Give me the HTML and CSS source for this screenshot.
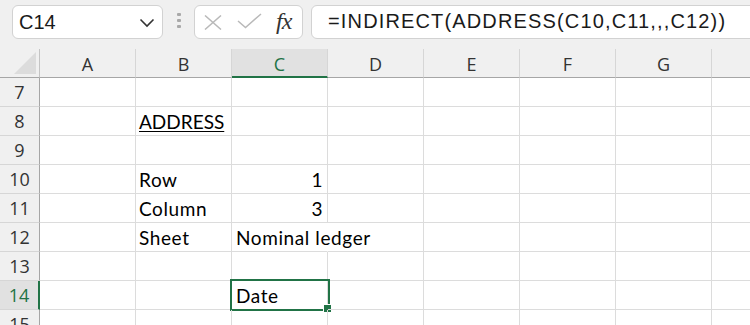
FILE: index.html
```
<!DOCTYPE html>
<html>
<head>
<meta charset="utf-8">
<link rel="stylesheet" href="styles.css">
</head>
<body>
<div class="toolbar">
  <div class="namebox">
    <span class="nb-text">C14</span>
    <svg class="chev" width="16" height="10" viewBox="0 0 16 10"><path d="M1.5 1.5 L8 8 L14.5 1.5" fill="none" stroke="#333" stroke-width="1.6"/></svg>
  </div>
  <div class="grip"><i></i><i></i><i></i></div>
  <div class="fxbox">
    <svg class="ico-x" width="18" height="15" viewBox="0 0 18 15"><path d="M1 0.5 L17 14.5 M17 0.5 L1 14.5" fill="none" stroke="#b9b9b9" stroke-width="1.5"/></svg>
    <svg class="ico-ok" width="25" height="16" viewBox="0 0 25 16"><path d="M1 8 L8.5 14.5 L24 1" fill="none" stroke="#b9b9b9" stroke-width="1.5"/></svg>
    <span class="fx">fx</span>
  </div>
  <div class="formula">=INDIRECT(ADDRESS(C10,C11,,,C12))</div>
</div>
<div class="sheet">
  <div class="hdr corner"><svg width="22" height="22" viewBox="0 0 22 22"><path d="M22 0 L22 22 L0 22 Z" fill="#dcdcdc"/></svg></div>
  <div class="hdr col">A</div>
  <div class="hdr col">B</div>
  <div class="hdr col active">C</div>
  <div class="hdr col">D</div>
  <div class="hdr col">E</div>
  <div class="hdr col">F</div>
  <div class="hdr col">G</div>
  <div class="hdr col last"></div>

  <div class="hdr row">7</div><div class="c"></div><div class="c"></div><div class="c"></div><div class="c"></div><div class="c"></div><div class="c"></div><div class="c"></div><div class="c last"></div>
  <div class="hdr row">8</div><div class="c"></div><div class="c"><span class="u">ADDRESS</span></div><div class="c"></div><div class="c"></div><div class="c"></div><div class="c"></div><div class="c"></div><div class="c last"></div>
  <div class="hdr row">9</div><div class="c"></div><div class="c"></div><div class="c"></div><div class="c"></div><div class="c"></div><div class="c"></div><div class="c"></div><div class="c last"></div>
  <div class="hdr row">10</div><div class="c"></div><div class="c">Row</div><div class="c num">1</div><div class="c"></div><div class="c"></div><div class="c"></div><div class="c"></div><div class="c last"></div>
  <div class="hdr row">11</div><div class="c"></div><div class="c">Column</div><div class="c num">3</div><div class="c"></div><div class="c"></div><div class="c"></div><div class="c"></div><div class="c last"></div>
  <div class="hdr row">12</div><div class="c"></div><div class="c">Sheet</div><div class="c spill">Nominal ledger</div><div class="c"></div><div class="c"></div><div class="c"></div><div class="c"></div><div class="c last"></div>
  <div class="hdr row">13</div><div class="c"></div><div class="c"></div><div class="c"></div><div class="c"></div><div class="c"></div><div class="c"></div><div class="c"></div><div class="c last"></div>
  <div class="hdr row active">14</div><div class="c"></div><div class="c"></div><div class="c sel">Date<div class="selbox"><div class="handle"></div></div></div><div class="c"></div><div class="c"></div><div class="c"></div><div class="c"></div><div class="c last"></div>
  <div class="hdr row">15</div><div class="c"></div><div class="c"></div><div class="c"></div><div class="c"></div><div class="c"></div><div class="c"></div><div class="c"></div><div class="c last"></div>
</div>
</body>
</html>
```
FILE: styles.css
```
html, body {
  margin: 0;
  padding: 0;
  background: #ffffff;
  overflow: hidden;
}
body {
  width: 750px;
  height: 325px;
}
.toolbar {
  height: 49px;
  box-sizing: border-box;
  background: #f0f0f0;
  display: flex;
  align-items: flex-start;
  padding: 5px 0 0 12px;
  overflow: hidden;
}
.namebox {
  width: 151px;
  height: 34px;
  box-sizing: border-box;
  background: #fff;
  border: 1px solid #d2d2d2;
  border-radius: 6px;
  display: flex;
  align-items: center;
  justify-content: space-between;
  padding: 0 7px 0 6px;
  flex: none;
}
.nb-text {
  font-family: "Liberation Sans", Arial, sans-serif;
  font-size: 20px;
  color: #1a1a1a;
}
.chev { margin-top: 1px; }
.grip {
  width: 4px;
  margin: 8px 13px 0 14px;
  display: flex;
  flex-direction: column;
  gap: 3px;
  flex: none;
}
.grip i {
  display: block;
  width: 4px;
  height: 3px;
  background: #a9a9a9;
  border-radius: 1px;
}
.fxbox {
  width: 109px;
  height: 34px;
  box-sizing: border-box;
  background: #fff;
  border: 1px solid #d2d2d2;
  border-radius: 6px;
  display: flex;
  align-items: center;
  padding: 0 0 0 9px;
  flex: none;
}
.ico-x { margin-top: 1px; }
.ico-ok { margin-left: 15px; margin-top: -2px; }
.fx {
  font-family: "Liberation Serif", "Times New Roman", serif;
  font-style: italic;
  font-size: 24px;
  color: #333;
  margin-left: 14px;
  margin-top: -2px;
  letter-spacing: -1px;
}
.formula {
  flex: none;
  width: 460px;
  height: 34px;
  box-sizing: border-box;
  margin-left: 8px;
  background: #fff;
  border: 1px solid #d2d2d2;
  border-radius: 6px 0 0 6px;
  padding-left: 16px;
  font-family: "Liberation Sans", Arial, sans-serif;
  font-size: 20px;
  line-height: 31px;
  color: #1a1a1a;
  white-space: nowrap;
  letter-spacing: 1.15px;
}
.sheet {
  display: grid;
  grid-template-columns: 40px repeat(7, 96px) 1fr;
  grid-template-rows: repeat(10, 29px);
}
.sheet > div {
  box-sizing: border-box;
  border-right: 1px solid #dcdcdc;
  border-bottom: 1px solid #dcdcdc;
  white-space: nowrap;
}
.hdr {
  background: #f0f0f0;
  font-family: "Open Sans", "Noto Sans", sans-serif;
  font-size: 18px;
  color: #333;
  display: flex;
  align-items: center;
  justify-content: center;
}
.hdr.col {
  border-bottom-color: #a6a6a6 !important;
  border-right-color: #d6d6d6 !important;
  padding-top: 2px;
}
.hdr.col.last { border-right: none !important; }
.hdr.col.active {
  background: #e1e1e1;
  color: #217346;
  border-bottom: 2px solid #217346 !important;
  padding-top: 3px;
}
.corner {
  border-bottom-color: #a6a6a6 !important;
  border-right-color: #c4c4c4 !important;
  align-items: flex-end !important;
  justify-content: flex-end !important;
  padding: 0 3px 3px 0;
}
.hdr.row {
  border-right-color: #a6a6a6 !important;
  border-bottom-color: #d6d6d6 !important;
}
.hdr.row.active {
  background: #e1e1e1;
  color: #217346;
  border-right: 2px solid #217346 !important;
}
.c {
  font-family: Lato, "Liberation Sans", sans-serif;
  font-size: 19px;
  letter-spacing: 0.6px;
  color: #000;
  line-height: 23px;
  padding: 3px 4px 0 3px;
  position: relative;
}
.c.last { border-right: none !important; }
.c.num { text-align: right; padding-right: 4px; }
.c.spill { border-right-color: transparent !important; padding-left: 4px; }
.c.sel { padding-left: 4px; }
.u { text-decoration: underline; text-underline-offset: 2px; text-decoration-thickness: 1px; letter-spacing: 0; }
.selbox {
  position: absolute;
  left: -2px;
  top: -2px;
  width: 100px;
  height: 32px;
  box-sizing: border-box;
  border: 2px solid #217346;
}
.handle {
  position: absolute;
  right: -4px;
  bottom: -4px;
  width: 7px;
  height: 7px;
  background: #217346;
  border: 1px solid #fff;
  box-sizing: content-box;
}
```
